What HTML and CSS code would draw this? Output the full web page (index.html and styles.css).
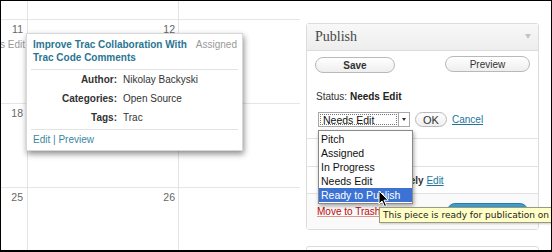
FILE: index.html
```html
<!DOCTYPE html>
<html>
<head>
<meta charset="utf-8">
<link rel="stylesheet" href="styles.css">
</head>
<body>
<div class="frame">
  <div class="calendar">
    <div class="cell c0"></div>
    <div class="cell c1"></div>
    <div class="cell c2"></div>

    <div class="cell c0"><div class="num">11</div><div class="ev"><span>Needs Edit</span></div></div>
    <div class="cell c1"><div class="num">12</div></div>
    <div class="cell c2"></div>

    <div class="cell c0"><div class="num">18</div></div>
    <div class="cell c1"></div>
    <div class="cell c2"></div>

    <div class="cell c0 last"><div class="num">25</div></div>
    <div class="cell c1 last"><div class="num">26</div></div>
    <div class="cell c2 last"></div>
  </div>

  <div class="side">
    <div class="pbox">
      <div class="phead"><span>Publish</span><span class="tri"></span></div>
      <div class="sec sec-main">
        <div class="minor">
          <span class="btn btn-save">Save</span>
          <span class="btn btn-preview">Preview</span>
        </div>
        <div class="status">Status: <b>Needs Edit</b></div>
        <div class="selrow">
          <div class="sel"><span class="sel-val">Needs Edit</span><span class="sel-arrow"></span></div>
          <span class="btn btn-ok">OK</span>
          <a class="link">Cancel</a>
        </div>
      </div>
      <div class="sec sec-vis">Visibility: <b>Public</b></div>
      <div class="sec sec-time">Publish <b>immediately</b>&nbsp;<a class="link">Edit</a></div>
      <div class="major">
        <a class="trash">Move to Trash</a>
        <span class="btn-publish">Publish</span>
      </div>
    </div>
    <div class="pbox2"></div>
  </div>

  <div class="popup">
    <div class="pop-head">
      <div class="pop-title">Improve Trac Collaboration With Trac Code Comments</div>
      <div class="pop-state">Assigned</div>
    </div>
    <div class="pop-rows">
      <div class="lbl">Author:</div><div class="val">Nikolay Backyski</div>
      <div class="lbl">Categories:</div><div class="val">Open Source</div>
      <div class="lbl">Tags:</div><div class="val">Trac</div>
    </div>
    <div class="pop-foot"><a class="plink">Edit</a> | <a class="plink">Preview</a></div>
  </div>

  <ul class="dropdown">
    <li>Pitch</li>
    <li>Assigned</li>
    <li>In Progress</li>
    <li>Needs Edit</li>
    <li class="hl">Ready to Publish</li>
  </ul>

  <svg class="cursor" width="12" height="18" viewBox="0 0 12 18">
    <path d="M1 1 L1 14 L4 11 L6.5 16.5 L8.5 15.5 L6 10.2 L10.2 10.2 Z" fill="#000" stroke="#fff" stroke-width="1"/>
  </svg>

  <div class="tooltip">This piece is ready for publication on the site</div>
</div>
</body>
</html>
```

FILE: styles.css
```css
* { box-sizing: border-box; }
html, body { margin: 0; padding: 0; background: #fff; }
body { font-family: "Liberation Sans", Arial, sans-serif; font-size: 10px; color: #333; }

.frame {
  position: relative;
  width: 552px;
  height: 252px;
  border-style: solid;
  border-color: #000;
  border-width: 1px 1px 2px 1px;
  overflow: hidden;
  display: flex;
  background: #fff;
}

.calendar {
  width: 299px;
  flex: none;
  display: grid;
  grid-template-columns: 27px 151px 121px;
  grid-template-rows: 19px 84px 84px 1fr;
}
.cell { border-bottom: 1px solid #e6e6e6; overflow: hidden; }
.cell.last { border-bottom: none; }
.c0, .c1 { border-right: 1px solid #e4e4e4; }
.num {
  text-align: right;
  padding: 3px 3px 0 0;
  line-height: 12px;
  font-size: 10.5px;
  color: #666;
}
.c0 .num { padding-right: 4px; }
.ev {
  display: flex;
  justify-content: flex-end;
  overflow: hidden;
  white-space: nowrap;
  margin-top: 3px;
  line-height: 13px;
  padding-right: 2px;
  color: #999;
}
.ev span { flex: none; }

.side { flex: 1; padding: 22px 0 0 6px; }
.pbox {
  width: 233px;
  height: 207px;
  border: 1px solid #dcdcdc;
  border-radius: 3px;
  display: flex;
  flex-direction: column;
  background: #fff;
}
.pbox2 {
  width: 233px;
  height: 40px;
  margin-top: 16px;
  border: 1px solid #dcdcdc;
  border-radius: 3px;
}
.phead {
  height: 27px;
  flex: none;
  border-bottom: 1px solid #dcdcdc;
  background: linear-gradient(#f8f8f8, #ededed);
  display: flex;
  align-items: center;
  justify-content: space-between;
  padding: 0 8px 1px 8px;
  font-family: "Liberation Serif", "Times New Roman", serif;
  font-size: 14px;
  color: #464646;
}
.tri {
  width: 0; height: 0;
  border-left: 3px solid transparent;
  border-right: 3px solid transparent;
  border-top: 5px solid #c4c4c4;
  margin-right: -1px;
}

.sec { flex: none; border-bottom: 1px solid #e2e2e2; padding-left: 9px; color: #333; }
.sec-main { height: 88px; padding: 0; }
.sec-vis { height: 28px; display: flex; align-items: center; padding-left: 26px; }
.sec-time { height: 27px; display: flex; align-items: center; padding-left: 26px; }

.minor {
  display: flex;
  justify-content: space-between;
  padding: 5px 8px 0 8px;
}
.btn {
  display: inline-flex;
  align-items: center;
  justify-content: center;
  height: 16px;
  border: 1px solid #b9b9b9;
  border-radius: 9px;
  background: linear-gradient(#ffffff, #eeeeee);
  color: #333;
  font-size: 10px;
}
.btn-save { width: 80px; font-weight: bold; margin-top: 1px; }
.btn-preview { width: 85px; }
.status { margin: 17px 0 0 9px; line-height: 14px; }
.status b { color: #222; }
.selrow { display: flex; align-items: center; margin: 8px 0 0 11px; height: 15px; }
.sel {
  width: 92px;
  height: 15px;
  border: 1px solid #a8a8a8;
  display: flex;
  background: #fff;
}
.sel-val {
  flex: 1;
  margin: 1px;
  border: 1px dotted #777;
  line-height: 10px;
  padding-left: 2px;
  color: #111;
  font-size: 10.5px;
}
.sel-arrow {
  width: 11px;
  border-left: 1px solid #a8a8a8;
  position: relative;
}
.sel-arrow::after {
  content: "";
  position: absolute;
  left: 3px; top: 5px;
  border-left: 2px solid transparent;
  border-right: 2px solid transparent;
  border-top: 3px solid #333;
}
.btn-ok { width: 32px; margin-left: 5px; height: 15px; font-size: 11px; }
.link { color: #21759b; text-decoration: underline; margin-left: 5px; }
.sec-time .link { margin-left: 0; }

.major {
  flex: 1;
  display: flex;
  align-items: center;
  justify-content: space-between;
  padding: 0 10px 1px 10px;
  background: #fafafa;
}
.trash { color: #bc0b0b; text-decoration: underline; text-decoration-color: #d98; }
.btn-publish {
  width: 81px;
  height: 16px;
  border-radius: 9px;
  background: linear-gradient(#3f9fd0, #2180b2);
  border: 1px solid #2a7aa6;
  color: #fff;
  font-weight: bold;
  display: flex;
  align-items: center;
  justify-content: center;
}

.popup {
  position: absolute;
  left: 25px;
  top: 32px;
  width: 217px;
  height: 118px;
  background: #fff;
  border: 1px solid #d8d8d8;
  box-shadow: 1px 3px 6px rgba(0,0,0,0.45);
  padding: 4px 4px 0 4px;
}
.pop-head {
  display: flex;
  justify-content: space-between;
  padding: 0 1px 0 2px;
  line-height: 13px;
  border-bottom: 1px solid #e3e3e3;
  padding-bottom: 5px;
}
.pop-title { width: 160px; font-weight: bold; color: #2a7593; }
.pop-state { color: #999; }
.pop-rows {
  display: grid;
  grid-template-columns: 86px 1fr;
  column-gap: 6px;
  grid-auto-rows: 19px;
  align-items: center;
  border-bottom: 1px solid #e3e3e3;
  padding-bottom: 2px;
  color: #333;
}
.lbl { text-align: right; font-weight: bold; color: #333; }
.pop-foot { padding: 3px 0 0 2px; line-height: 13px; color: #3a87a3; }
.plink { color: #3a87a3; }

.dropdown {
  position: absolute;
  left: 317px;
  top: 129px;
  width: 95px;
  margin: 0;
  padding: 1px 0;
  list-style: none;
  background: #fff;
  border: 1px solid #8a8a8a;
  box-shadow: 1px 2px 4px rgba(0,0,0,0.35);
  font-size: 10.5px;
  color: #111;
}
.dropdown li { height: 14px; line-height: 14px; padding-left: 2px; }
.dropdown li.hl { background: #3b72d4; color: #fff; }

.cursor { position: absolute; left: 377px; top: 189px; }

.tooltip {
  position: absolute;
  left: 378px;
  top: 206px;
  height: 16px;
  line-height: 14px;
  padding: 0 3px;
  white-space: nowrap;
  background: #ffffc6;
  border: 1px solid #9a9a80;
  font-family: "DejaVu Sans", Verdana, sans-serif;
  font-size: 9px;
  color: #222;
  box-shadow: 1px 1px 2px rgba(0,0,0,0.2);
}
```
